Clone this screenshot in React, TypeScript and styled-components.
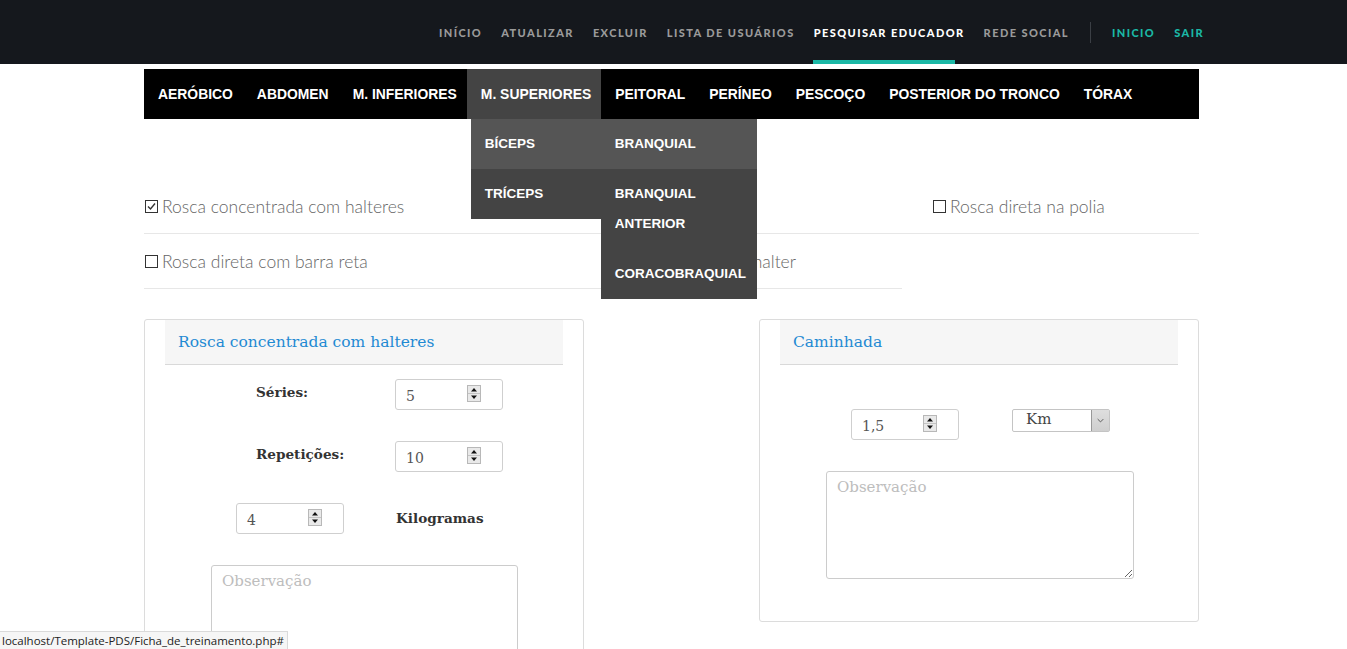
import React from "react";
import styled, { createGlobalStyle } from "styled-components";

const GlobalStyle = createGlobalStyle`
  html, body {
    margin: 0;
    padding: 0;
    background: #fff;
  }
  * {
    box-sizing: border-box;
  }
`;

const topLinks = [
  { label: "INÍCIO" },
  { label: "ATUALIZAR" },
  { label: "EXCLUIR" },
  { label: "LISTA DE USUÁRIOS" },
  { label: "PESQUISAR EDUCADOR", active: true },
  { label: "REDE SOCIAL" },
];

const categories = [
  "AERÓBICO",
  "ABDOMEN",
  "M. INFERIORES",
  "M. SUPERIORES",
  "PEITORAL",
  "PERÍNEO",
  "PESCOÇO",
  "POSTERIOR DO TRONCO",
  "TÓRAX",
];

const exercises = [
  { label: "Rosca concentrada com halteres", checked: true, indent: 0 },
  { label: "Rosca Scott", checked: false, indent: 14 },
  { label: "Rosca direta na polia", checked: false, indent: 30 },
  { label: "Rosca direta com barra reta", checked: false, indent: 0 },
  { label: "Rosca Scott com halter", checked: false, indent: 4 },
];

const Spinner = () => (
  <SpinBox viewBox="0 0 14 17" width="14" height="17">
    <rect x="0.5" y="0.5" width="13" height="16" fill="#e9e9e9" stroke="#b8b8b8" />
    <line x1="1" y1="8.5" x2="13" y2="8.5" stroke="#c4c4c4" />
    <polygon points="4,6.5 10,6.5 7,3" fill="#111" />
    <polygon points="4,10.5 10,10.5 7,14" fill="#111" />
  </SpinBox>
);

const CheckIcon = ({ checked }: { checked: boolean }) => (
  <CheckSvg viewBox="0 0 13 13" width="13" height="13">
    <rect x="0.5" y="0.5" width="12" height="12" fill="#fff" stroke="#333" />
    {checked && <polyline points="3,6.5 5.5,9 10,3.5" fill="none" stroke="#333" strokeWidth="1.4" />}
  </CheckSvg>
);

const NumberField = ({ value }: { value: string }) => (
  <NumberBox>
    <NumberValue>{value}</NumberValue>
    <Spinner />
  </NumberBox>
);

export default function App() {
  return (
    <>
      <GlobalStyle />
      <TopBar>
        <TopNav>
          {topLinks.map((l) => (
            <TopLink key={l.label} $active={l.active}>
              {l.label}
            </TopLink>
          ))}
          <Divider />
          <TopLink $teal>INICIO</TopLink>
          <TopLink $teal>SAIR</TopLink>
        </TopNav>
      </TopBar>

      <Page>
        <CategoryBar>
          {categories.map((c) => (
            <CategoryItem key={c} $active={c === "M. SUPERIORES"}>
              {c}
              {c === "M. SUPERIORES" && (
                <Dropdown>
                  <DropItem $hover>
                    BÍCEPS
                    <SubMenu>
                      <DropItem $hover>BRANQUIAL</DropItem>
                      <DropItem>BRANQUIAL ANTERIOR</DropItem>
                      <DropItem>CORACOBRAQUIAL</DropItem>
                    </SubMenu>
                  </DropItem>
                  <DropItem>TRÍCEPS</DropItem>
                </Dropdown>
              )}
            </CategoryItem>
          ))}
        </CategoryBar>

        <ExerciseGrid>
          {exercises.map((e) => (
            <ExerciseCell key={e.label} $indent={e.indent}>
              <CheckIcon checked={e.checked} />
              {e.label}
            </ExerciseCell>
          ))}
        </ExerciseGrid>

        <Cards>
          <Card>
            <CardHeader>Rosca concentrada com halteres</CardHeader>
            <CardBody $top={14}>
              <FormRow $col={159}>
                <FieldLabel $indent={20}>Séries:</FieldLabel>
                <NumberField value="5" />
              </FormRow>
              <FormRow $col={159}>
                <FieldLabel $indent={20}>Repetições:</FieldLabel>
                <NumberField value="10" />
              </FormRow>
              <FormRow $col={159}>
                <NumberField value="4" />
                <FieldLabel $indent={1} $top={2}>
                  Kilogramas
                </FieldLabel>
              </FormRow>
              <Notes placeholder="Observação" readOnly $width={307} />
            </CardBody>
          </Card>

          <Card>
            <CardHeader>Caminhada</CardHeader>
            <CardBody $top={44}>
              <FormRow $col={161}>
                <NumberField value="1,5" />
                <SelectBox>
                  <SelectValue>Km</SelectValue>
                  <SelectArrow>
                    <svg viewBox="0 0 18 21" width="18" height="21">
                      <polyline points="6,9 9,12 12,9" fill="none" stroke="#555" strokeWidth="1" />
                    </svg>
                  </SelectArrow>
                </SelectBox>
              </FormRow>
              <Notes placeholder="Observação" readOnly $width={308} />
            </CardBody>
          </Card>
        </Cards>
      </Page>

      <StatusBar>localhost/Template-PDS/Ficha_de_treinamento.php#</StatusBar>
    </>
  );
}

const TopBar = styled.header`
  height: 64px;
  background: #15181d;
  display: flex;
  justify-content: flex-end;
  padding-right: 143px;
`;

const TopNav = styled.nav`
  display: flex;
  align-items: stretch;
  gap: 19px;
`;

const TopLink = styled.a<{ $active?: boolean; $teal?: boolean }>`
  position: relative;
  display: flex;
  align-items: center;
  font-family: Lato, "Open Sans", sans-serif;
  font-weight: 900;
  font-size: 11px;
  letter-spacing: 1.42px;
  color: ${(p) => (p.$teal ? "#1bb8a6" : p.$active ? "#ffffff" : "#9a9a9a")};
  cursor: pointer;

  &::after {
    content: "";
    display: ${(p) => (p.$active ? "block" : "none")};
    position: absolute;
    left: -1px;
    bottom: 0;
    width: 142px;
    height: 4px;
    background: #1bb8a6;
  }
`;

const Divider = styled.span`
  align-self: center;
  width: 1px;
  height: 21px;
  background: #3b3f45;
  margin: 0 2px;
`;

const Page = styled.main`
  width: 1055px;
  margin-left: 144px;
`;

const CategoryBar = styled.ul`
  list-style: none;
  margin: 5px 0 0;
  padding: 0;
  height: 50px;
  background: #000;
  display: flex;
`;

const CategoryItem = styled.li<{ $active?: boolean }>`
  position: relative;
  padding: 0 10px 0 14px;
  line-height: 50px;
  font-family: "Liberation Sans", Arial, sans-serif;
  font-weight: bold;
  font-size: 13.9px;
  color: #fff;
  white-space: nowrap;
  background: ${(p) => (p.$active ? "#444" : "transparent")};
`;

const Dropdown = styled.ul`
  position: absolute;
  top: 50px;
  left: 4px;
  width: 130px;
  margin: 0;
  padding: 0;
  list-style: none;
  background: #444;
  z-index: 10;
`;

const DropItem = styled.li<{ $hover?: boolean }>`
  position: relative;
  padding: 10px 10px 10px 14px;
  line-height: 30px;
  font-size: 13.5px;
  white-space: normal;
  background: ${(p) => (p.$hover ? "#555" : "#444")};
`;

const SubMenu = styled.ul`
  position: absolute;
  top: 0;
  left: 100%;
  width: 156px;
  margin: 0;
  padding: 0;
  list-style: none;
  background: #444;
`;

const ExerciseGrid = styled.div`
  margin-top: 60px;
  display: grid;
  grid-template-columns: 458px 300px 297px;
`;

const ExerciseCell = styled.label<{ $indent: number }>`
  height: 55px;
  display: flex;
  align-items: center;
  gap: 4px;
  padding-left: ${(p) => p.$indent}px;
  border-bottom: 1px solid #e7e7e7;
  font-family: Lato, "Open Sans", sans-serif;
  font-weight: 300;
  font-size: 17.5px;
  color: #666;
  white-space: nowrap;
`;

const CheckSvg = styled.svg`
  flex: none;
  margin-left: 1px;
`;

const Cards = styled.div`
  margin-top: 30px;
  display: flex;
  justify-content: space-between;
  align-items: flex-start;
`;

const Card = styled.section`
  width: 440px;
  border: 1px solid #dcdcdc;
  border-radius: 3px;
  padding: 0 20px 42px;
`;

const CardHeader = styled.h3`
  margin: 0;
  height: 45px;
  display: flex;
  align-items: center;
  padding-left: 13px;
  padding-bottom: 1px;
  background: #f6f6f6;
  border-bottom: 1px solid #d9d9d9;
  font-family: "DejaVu Serif", "Liberation Serif", serif;
  font-weight: normal;
  font-size: 15.5px;
  color: #1f8ad3;
`;

const CardBody = styled.div<{ $top: number }>`
  padding-top: ${(p) => p.$top}px;
  display: flex;
  flex-direction: column;
  gap: 31px;
`;

const FormRow = styled.div<{ $col: number }>`
  display: grid;
  grid-template-columns: ${(p) => p.$col}px auto;
  padding-left: 71px;
  align-items: start;
`;

const FieldLabel = styled.span<{ $indent: number; $top?: number }>`
  padding-left: ${(p) => p.$indent}px;
  padding-top: ${(p) => p.$top ?? 0}px;
  line-height: 26px;
  font-family: "DejaVu Serif", "Liberation Serif", serif;
  font-weight: bold;
  font-size: 13.6px;
  color: #333;
`;

const NumberBox = styled.div`
  width: 108px;
  height: 31px;
  border: 1px solid #cfcfcf;
  border-radius: 3px;
  display: flex;
  align-items: center;
  padding-left: 10px;
  font-family: "DejaVu Serif", "Liberation Serif", serif;
  font-size: 14px;
  color: #555;
`;

const NumberValue = styled.span`
  width: 61px;
  padding-top: 2px;
`;

const SpinBox = styled.svg`
  flex: none;
  margin-top: -2px;
`;

const SelectBox = styled.div`
  width: 98px;
  height: 23px;
  border: 1px solid #c4c4c4;
  border-radius: 2px;
  display: flex;
  align-items: center;
  justify-content: space-between;
  font-family: "DejaVu Serif", "Liberation Serif", serif;
  font-size: 15px;
  color: #444;
`;

const SelectValue = styled.span`
  padding-left: 13px;
  margin-top: -3px;
`;

const SelectArrow = styled.span`
  width: 18px;
  height: 21px;
  display: flex;
  background: linear-gradient(#dedede, #cfcfcf);
  border-left: 1px solid #999;
`;

const Notes = styled.textarea<{ $width: number }>`
  display: block;
  margin-left: 46px;
  width: ${(p) => p.$width}px;
  height: 108px;
  padding: 6px 10px;
  border: 1px solid #cccccc;
  border-radius: 3px;
  font-family: "DejaVu Serif", "Liberation Serif", serif;
  font-size: 15px;
  color: #555;
  outline: none;

  &::placeholder {
    color: #bdbdbd;
  }
`;

const StatusBar = styled.div`
  position: fixed;
  left: 0;
  bottom: 0;
  height: 18px;
  padding: 0 3px 0 2px;
  display: flex;
  align-items: center;
  background: #f6f6f6;
  border-top: 1px solid #dadada;
  border-right: 1px solid #dadada;
  font-family: "Open Sans", "Liberation Sans", sans-serif;
  font-size: 11.5px;
  color: #222;
  z-index: 20;
`;
